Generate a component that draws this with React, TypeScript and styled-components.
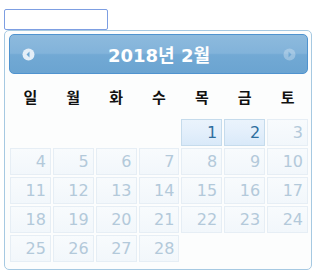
import React from 'react';
import styled, { createGlobalStyle } from 'styled-components';

const GlobalStyle = createGlobalStyle`
    body {
        margin: 0;
        background: #ffffff;
        font-family: "DejaVu Sans", Verdana, sans-serif;
    }
`;

const Page = styled.div`
    padding: 9px 0 0 4px;
`;

const DateInput = styled.input`
    display: block;
    box-sizing: border-box;
    width: 104px;
    height: 21px;
    margin: 0;
    border: 1px solid #7d9ee2;
    border-radius: 2px;
    outline: none;
    background: #ffffff;
`;

const Picker = styled.div`
    box-sizing: border-box;
    width: 308px;
    height: 240px;
    margin-top: 0;
    padding: 3px 3px 0 4px;
    border: 1px solid #a6c9e2;
    border-radius: 5px;
    background: #fcfdfd;
`;

const Header = styled.div`
    box-sizing: border-box;
    height: 40px;
    display: flex;
    align-items: center;
    justify-content: space-between;
    padding: 0 11px 0 12px;
    border: 1px solid #4f93cf;
    border-radius: 5px;
    background: linear-gradient(#8dbadd 0%, #82b3da 48%, #72a9d4 52%, #6ba4d1 100%);
`;

const Title = styled.div`
    color: #ffffff;
    font-family: "DejaVu Sans", "Noto Sans CJK KR", sans-serif;
    font-weight: bold;
    font-size: 18px;
    letter-spacing: 0;
`;

const NavIcon = styled.svg<{ $disabled?: boolean }>`
    width: 13px;
    height: 13px;
    opacity: ${(p) => (p.$disabled ? 0.35 : 1)};
`;

const Table = styled.table`
    width: 300px;
    border-collapse: collapse;
    margin-top: 0;
`;

const WeekHead = styled.th`
    height: 44px;
    padding: 0;
    font-family: "Noto Sans CJK KR", sans-serif;
    font-weight: bold;
    font-size: 15px;
    color: #111111;
    text-align: center;
    vertical-align: middle;
`;

const Cell = styled.td`
    padding: 1px;
`;

const Day = styled.span<{ $disabled?: boolean }>`
    display: block;
    box-sizing: border-box;
    height: 27px;
    line-height: 25px;
    padding-right: 4px;
    text-align: right;
    font-size: 16px;
    border: 1px solid ${(p) => (p.$disabled ? '#e6eef5' : '#c5dbec')};
    background: ${(p) =>
        p.$disabled
            ? 'linear-gradient(#f8fbfd, #f2f7fb)'
            : 'linear-gradient(#eaf3fc 0%, #e3effb 50%, #d9e9f9 100%)'};
    color: ${(p) => (p.$disabled ? '#b3c9da' : '#2e6e9e')};
`;

const weekdays = ['일', '월', '화', '수', '목', '금', '토'];

const rows: (number | null)[][] = [
    [null, null, null, null, 1, 2, 3],
    [4, 5, 6, 7, 8, 9, 10],
    [11, 12, 13, 14, 15, 16, 17],
    [18, 19, 20, 21, 22, 23, 24],
    [25, 26, 27, 28, null, null, null],
];

const Arrow = ({ dir, disabled }: { dir: 'prev' | 'next'; disabled?: boolean }) => (
    <NavIcon viewBox="0 0 13 13" $disabled={disabled}>
        <circle cx="6.5" cy="6.5" r="6" fill="#e4eef7" />
        {dir === 'prev' ? (
            <path d="M4.5 6.5 L7.5 3.5 L7.5 9.5 Z" fill="#6fa7d3" />
        ) : (
            <path d="M8.5 6.5 L5.5 3.5 L5.5 9.5 Z" fill="#6fa7d3" />
        )}
    </NavIcon>
);

const App = () => {
    return (
        <Page>
            <GlobalStyle />
            <DateInput type="text" />
            <Picker>
                <Header>
                    <Arrow dir="prev" />
                    <Title>2018년 2월</Title>
                    <Arrow dir="next" disabled />
                </Header>
                <Table>
                    <thead>
                        <tr>
                            {weekdays.map((d) => (
                                <WeekHead key={d}>{d}</WeekHead>
                            ))}
                        </tr>
                    </thead>
                    <tbody>
                        {rows.map((row, i) => (
                            <tr key={i}>
                                {row.map((n, j) => (
                                    <Cell key={j}>
                                        {n !== null && <Day $disabled={n > 2}>{n}</Day>}
                                    </Cell>
                                ))}
                            </tr>
                        ))}
                    </tbody>
                </Table>
            </Picker>
        </Page>
    );
};

export default App;
